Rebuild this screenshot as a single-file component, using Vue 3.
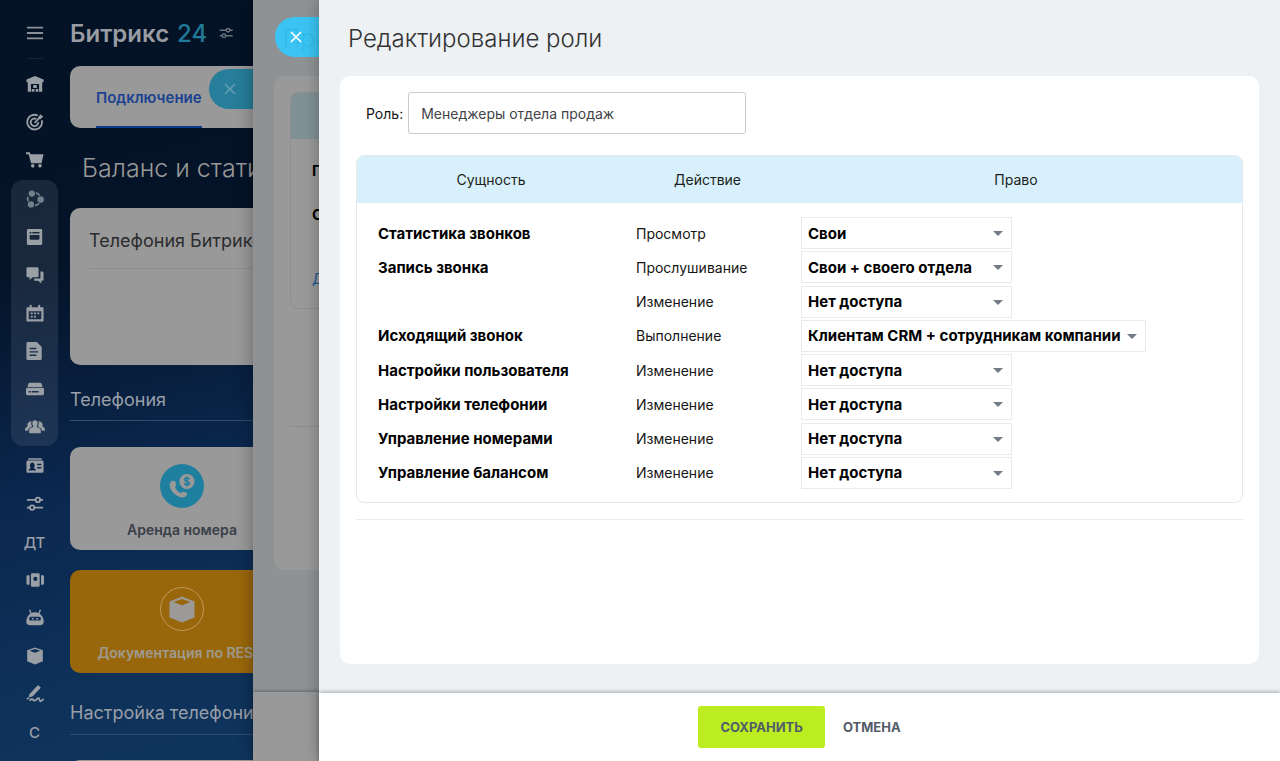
<script setup>
import { ref } from 'vue'

const role = ref('Менеджеры отдела продаж')

const rows = [
  { id: 'stat', entity: 'Статистика звонков', action: 'Просмотр', right: 'Свои' },
  { id: 'record', entity: 'Запись звонка', action: 'Прослушивание', right: 'Свои + своего отдела' },
  { id: 'record-edit', entity: '', action: 'Изменение', right: 'Нет доступа' },
  { id: 'call', entity: 'Исходящий звонок', action: 'Выполнение', right: 'Клиентам CRM + сотрудникам компании' },
  { id: 'user', entity: 'Настройки пользователя', action: 'Изменение', right: 'Нет доступа' },
  { id: 'tel', entity: 'Настройки телефонии', action: 'Изменение', right: 'Нет доступа' },
  { id: 'numbers', entity: 'Управление номерами', action: 'Изменение', right: 'Нет доступа' },
  { id: 'balance', entity: 'Управление балансом', action: 'Изменение', right: 'Нет доступа' },
]
</script>

<template>
  <div class="app">
    <nav class="side">
      <button class="item burger" type="button">
        <svg viewBox="0 0 20 20"><path d="M1 4h18M1 10h18M1 16h18" class="line" /></svg>
      </button>
      <hr class="side-line" />
      <a class="item" href="#">
        <svg viewBox="0 0 20 20"><path fill-rule="evenodd" d="M10 1 19.500 5V8H18v10.500H14.500V10h-9v8.500H2V8H.5V5ZM8 11h4v3.500H8ZM6.300 15.500h3V18.500h-3ZM10.700 15.500h3V18.500h-3Z" /></svg>
      </a>
      <a class="item" href="#">
        <svg viewBox="0 0 20 20"><path class="line" d="M13 2.700A8.200 8.200 0 1 0 17.500 8M11.500 6.700A4.200 4.200 0 1 0 13.600 10M9.500 11l5.500-5.500" /><path d="m13.500 4.500 3.300-3.500.6 2 2 .6-3.400 3.300-2.200-.2Z" /></svg>
      </a>
      <a class="item" href="#">
        <svg viewBox="0 0 20 20"><path d="M0 1.500h4.200l.8 2H19.500l-2.200 10H5.600L2.900 3.500H0Z" /><circle cx="7.500" cy="16.500" r="2" /><circle cx="15.500" cy="16.500" r="2" /></svg>
      </a>
      <div class="group">
        <a class="item soft" href="#">
          <svg viewBox="0 0 20 20"><circle cx="6.500" cy="4" r="3.500" /><circle cx="16.300" cy="10.500" r="3.600" /><circle cx="5.500" cy="16" r="3.500" /><path class="line" d="M11 3.300q3 .7 4 3M2.300 7.500q-1 2.500 0 5M10 17.300q3-.4 4.500-2.800" /></svg>
        </a>
        <a class="item" href="#">
          <svg viewBox="0 0 20 20"><path fill-rule="evenodd" d="M2.500 1h14Q18 1 18 2.500v15q0 1.500-1.500 1.500h-14Q1 19 1 17.500v-15Q1 1 2.500 1ZM4 4.500v1.600h2V4.500ZM7 4.500v1.600h8V4.500ZM4 7.800v4q0 1.200 1 1.200h9q1 0 1-1.200v-4Z" /></svg>
        </a>
        <a class="item" href="#">
          <svg viewBox="0 0 20 20"><path d="M2 1.500h10.500Q14 1.500 14 3v8q0 1.500-1.500 1.500H7.500L4 15.500v-3H2Q.5 12.500.5 11V3Q.5 1.500 2 1.500ZM16 6h2q1.500 0 1.500 1.500V15q0 1.500-1.500 1.500h-1V19.500l-3.500-3H9V14h7Z" /></svg>
        </a>
        <a class="item" href="#">
          <svg viewBox="0 0 20 20"><path fill-rule="evenodd" d="M.5 4.500q0-1 1-1H4V2a1.200 1.200 0 0 1 2.400 0v1.500h7V2A1.200 1.200 0 0 1 15.800 2v1.500h2.700q1 0 1 1V18.500q0 1-1 1H1.500q-1 0-1-1ZM3 8v9h14V8ZM5.200 9.500h2.300v2H5.200ZM8.800 9.500h2.300v2H8.800ZM12.500 9.500h2.300v2h-2.300ZM5.200 13h2.300v2H5.200ZM8.800 13h2.300v2H8.800Z" /></svg>
        </a>
        <a class="item" href="#">
          <svg viewBox="0 0 20 20"><path fill-rule="evenodd" d="M2 0H12l5.500 5.500V18.500q0 1.500-1.500 1.500H2Q.5 20 .5 18.500v-17Q.5 0 2 0ZM4 6.500v1.600h7.500V6.500ZM4 10.200v1.600h9.500v-1.600ZM4 14v1.600h7.500V14Z" /></svg>
        </a>
        <a class="item" href="#">
          <svg viewBox="0 0 20 20"><path fill-rule="evenodd" d="M4 3h12q1 0 1.500 1.500L18.500 8H1.500L2.500 4.500Q3 3 4 3ZM1 9h18q1 0 1 1v5.400q0 1.600-1.500 1.600H1.500Q0 17 0 15.400V10Q0 9 1 9ZM3 12.200v1.600h2.300v-1.600ZM6.300 12.200v1.600H14v-1.600Z" /></svg>
        </a>
        <a class="item" href="#">
          <svg class="wide" viewBox="0 0 22 20"><path d="M11 2.500c2 0 3 1.400 3 3.300 0 1.500-.7 2.600-1.300 3.300.1 1.300 4.800 1.800 4.800 4.400V17H4.500v-3.500c0-2.600 4.700-3.100 4.800-4.400C8.700 8.400 8 7.300 8 5.800 8 3.900 9 2.500 11 2.500ZM4.500 4.500c.8-1.200 2-1 2.500-.6-.5 2-.1 4 .8 5.200-.6 1.300-4.300 1.600-4.600 5H0v-1.900c0-1.900 2.700-2.200 3-3.200C1.700 8 2.800 5.200 4.500 4.500ZM17.500 4.500c-.8-1.200-2-1-2.500-.6.5 2 .1 4-.8 5.200.6 1.300 4.300 1.600 4.600 5H22v-1.900c0-1.900-2.700-2.200-3-3.200 1.300-1 .2-3.800-1.500-4.500Z" /></svg>
        </a>
      </div>
      <a class="item" href="#">
        <svg viewBox="0 0 20 20"><path fill-rule="evenodd" d="M2.500 1.500h15V3h-15ZM2 4h16q1.500 0 1.500 1.500V16q0 1.500-1.500 1.500H2Q.5 17.500.5 16V5.500Q.5 4 2 4ZM2.800 15h8.400c0-2-2.500-2-2.500-3C10.400 10.300 9.600 6 7 6S3.600 10.300 5.300 12C5.300 13 2.800 13 2.800 15ZM12.500 7.500v1.800H17V7.500ZM12.500 11v1.800H17V11Z" /></svg>
      </a>
      <a class="item" href="#">
        <svg viewBox="0 0 20 20"><path class="line" d="M1 5.500h9.500M16 5.500h3M1 14h3M9.500 14h9.500" /><circle class="line" cx="13.200" cy="5.500" r="2.500" /><circle class="line" cx="6.800" cy="14" r="2.500" /></svg>
      </a>
      <a class="item letter" href="#">ДТ</a>
      <a class="item" href="#">
        <svg viewBox="0 0 20 20"><path fill-rule="evenodd" d="M6.700 2.500h7.300q1.200 0 1.200 1.200v12.600q0 1.200-1.200 1.200H6.700q-1.200 0-1.200-1.200V3.700q0-1.200 1.200-1.200ZM10.400 6.500a2.300 2.300 0 1 0 0 4.600 2.300 2.300 0 0 0 0-4.600ZM.5 6q0-1.200 1.200-1.200h2.300v10.400H1.700Q.5 15.200.5 14ZM16.700 4.800h2.100Q20 4.800 20 6v8q0 1.200-1.200 1.200h-2.100Z" /></svg>
      </a>
      <a class="item" href="#">
        <svg viewBox="0 0 20 20"><path class="line thin" d="M4 .8 5.500 5M16 .8 14.500 5" /><path fill-rule="evenodd" d="M10 3.500c5 0 8.500 3.500 9.500 8.500.8 3.800-.5 6-3.500 6H4c-3 0-4.300-2.200-3.500-6C1.500 7 5 3.500 10 3.500ZM5.500 8.700a2.100 2.100 0 0 0 0 4.200h9a2.100 2.100 0 0 0 0-4.200ZM6.500 9.900h2v1.800h-2ZM11.500 9.900h2v1.800h-2Z" /></svg>
      </a>
      <a class="item" href="#">
        <svg viewBox="0 0 20 20"><path fill-rule="evenodd" d="m10 .5 8.700 3.200v12L10 19.500l-8.700-3.800v-12ZM4 4.200 10 6.500l6-2.300L10 2.200Z" /></svg>
      </a>
      <a class="item" href="#">
        <svg viewBox="0 0 20 20"><path d="m12 1.500 1.800-1.200 2.700 2.700L7.500 12.500l-4.500 1.500L3.500 10.500ZM.5 15 2.500 13.500l1.500 1.500-2.500 1.500Z" /><path class="line" d="M4 17.500q2.500-3 4-1t4-.8 3 .8 4.500-1" /></svg>
      </a>
      <a class="item letter" href="#">С</a>
    </nav>

    <main class="page">
      <h1 class="brand">Битрикс <span>24</span>
        <svg viewBox="0 0 20 20"><path class="line" d="M1 6h9.500M15.500 6h4M1 14h3.500M9.500 14h10" /><circle class="line" cx="13" cy="6" r="2.500" /><circle class="line" cx="7" cy="14" r="2.500" /></svg>
      </h1>
      <div class="card tabs"><a class="tab" href="#">Подключение</a></div>
      <h2 class="title">Баланс и статистика</h2>
      <section class="card balance"><h3>Телефония Битрикс24</h3></section>
      <h3 class="section">Телефония</h3>
      <a class="card tile" href="#">
        <svg class="tile-icon" viewBox="0 0 44 44">
          <circle cx="22" cy="22" r="22" fill="#1f7f9f" />
          <path fill="#999" d="M12 17c1.500-.8 3.200 0 3.700 1.800l.5 2c.2 1-1.300 1.800-1 2.700 1 2.500 3 4.500 5.400 5.500.9.300 1.600-1.300 2.600-1.200l2.300.5c1.700.5 2 2.200.8 3.500C21.800 37 9.700 28.600 9.700 21.200c0-2.100.8-3.500 2.300-4.200Z" />
          <circle cx="27" cy="17.500" r="7.600" fill="#999" />
          <path fill="none" stroke="#1f7f9f" stroke-width="1.500" d="M29.500 15.500c-.5-1.800-5-2-5 .2s5 1.400 5 3.600-4.500 2.200-5.200 0M27 12.500v10" />
        </svg>
        Аренда номера
      </a>
      <a class="card tile orange" href="#">
        <svg class="tile-icon" viewBox="0 0 44 44">
          <circle cx="22" cy="22" r="21.500" fill="none" stroke="#bd9a5c" />
          <path fill="#9b9a98" fill-rule="evenodd" d="m22 9.500 12.500 5v16L22 35.500l-12.500-5v-16ZM13.500 15 22 18.200 30.500 15 22 12Z" />
        </svg>
        Документация по RES...
      </a>
      <h3 class="section">Настройка телефонии</h3>
      <div class="card stub"></div>
    </main>

    <button class="close first" type="button" aria-label="×">
      <svg viewBox="0 0 12 12"><path d="m1 1 10 10M11 1 1 11" /></svg>
    </button>

    <aside class="panel back">
      <h2 class="panel-title">Права</h2>
      <div class="back-card">
        <div class="back-table">
          <div class="back-head"></div>
          <b>П</b>
          <b>С</b>
          <a href="#">Д</a>
        </div>
        <hr />
      </div>
      <div class="back-foot"></div>
    </aside>

    <button class="close second" type="button" aria-label="×">
      <svg viewBox="0 0 12 12"><path d="m1 1 10 10M11 1 1 11" /></svg>
    </button>

    <form class="panel front" @submit.prevent>
      <h2 class="front-title">Редактирование роли</h2>
      <div class="content">
        <div class="role">
          <label for="role">Роль:</label>
          <input id="role" v-model="role" type="text" />
        </div>
        <div class="frame">
          <table>
            <thead>
              <tr><th class="c1">Сущность</th><th class="c2">Действие</th><th>Право</th></tr>
            </thead>
            <tbody>
              <tr v-for="r in rows" :key="r.id">
                <td class="entity">{{ r.entity }}</td>
                <td><label :for="r.id">{{ r.action }}</label></td>
                <td>
                  <span class="select"><select :id="r.id"><option>{{ r.right }}</option></select></span>
                </td>
              </tr>
            </tbody>
          </table>
        </div>
        <hr class="end" />
      </div>
      <footer class="foot">
        <button class="save" type="submit">СОХРАНИТЬ</button>
        <button class="cancel" type="button">ОТМЕНА</button>
      </footer>
    </form>
  </div>
</template>

<style>
body {
  margin: 0;
}
</style>

<style scoped>
* {
  box-sizing: border-box;
}
.app {
  position: relative;
  display: flex;
  height: 100vh;
  overflow: hidden;
  font-family: Inter, "Liberation Sans", sans-serif;
  font-size: 15px;
  background: linear-gradient(168deg, #041226 0%, #041327 26%, #0b2850 50%, #0e3159 68%, #103b67 100%);
}
a {
  text-decoration: none;
}
button {
  border: 0;
  padding: 0;
  background: none;
  font: inherit;
}
h1, h2, h3, hr {
  margin: 0;
}
hr {
  border: 0;
}
.line {
  fill: none;
  stroke: currentColor;
  stroke-width: 2;
}
.thin {
  stroke-width: 1.5;
}

.side {
  display: flex;
  flex-direction: column;
  align-items: center;
  flex: none;
  width: 70px;
  padding: 14px 12px 0 11px;
}
.item {
  display: flex;
  align-items: center;
  justify-content: center;
  flex: none;
  width: 47px;
  height: 38px;
  color: #9a9fa6;
}
.item svg {
  width: 18px;
  height: 18px;
  fill: currentColor;
}
.item .wide {
  width: 20px;
}
.burger {
  color: #8a9099;
}
.soft {
  color: #75808d;
}
.letter {
  font-size: 15px;
  font-weight: 500;
}
.side-line {
  flex: none;
  width: 16px;
  height: 1px;
  margin: 6px 0;
  background: #182539;
}
.group {
  flex: none;
  margin: 1px 0;
  border-radius: 12px;
  background: rgba(150, 160, 180, 0.15);
}

.page {
  display: flex;
  flex-direction: column;
  flex: 1;
  min-width: 0;
  color: #999;
}
.page > * {
  flex: none;
}
.brand {
  display: flex;
  align-items: center;
  gap: 8px;
  height: 66px;
  font-size: 24px;
  font-weight: 600;
  color: #999da3;
}
.brand span {
  font-weight: 500;
  color: #207a99;
}
.brand svg {
  width: 14px;
  height: 14px;
  margin-left: 4px;
  color: #6a727d;
}
.card {
  border-radius: 10px;
  background: #999;
}
.tabs {
  height: 62px;
  padding-left: 26px;
}
.tab {
  display: inline-flex;
  align-items: center;
  height: 62px;
  padding-top: 2px;
  border-bottom: 2px solid #103c8f;
  font-weight: 600;
  color: #1a4291;
}
.title {
  height: 80px;
  padding-left: 12px;
  font-size: 25px;
  font-weight: 300;
  line-height: 80px;
}
.balance {
  height: 157px;
  padding: 0 19px;
}
.balance h3 {
  height: 61px;
  border-bottom: 1px solid #8b8d8f;
  font-size: 18px;
  font-weight: 400;
  line-height: 66px;
  color: #2b2c2e;
}
.section {
  height: 56px;
  border-bottom: 1px solid #2f4d70;
  font-size: 18px;
  font-weight: 400;
  line-height: 70px;
  color: #999fa8;
}
.tile {
  display: flex;
  flex-direction: column;
  align-items: center;
  gap: 13px;
  width: 224px;
  height: 103px;
  margin-top: 26px;
  padding-top: 17px;
  font-size: 14px;
  font-weight: 600;
  color: #3a4049;
}
.tile + .tile {
  margin-top: 20px;
}
.tile-icon {
  flex: none;
  width: 44px;
  height: 44px;
}
.orange {
  background: #99670b;
  color: #9f9a90;
}
.orange + .section {
  height: 62px;
  line-height: 80px;
}
.stub {
  height: 102px;
  margin-top: 25px;
}

.close {
  position: absolute;
  display: flex;
  align-items: center;
  height: 40px;
  border-radius: 20px 0 0 20px;
}
.close svg {
  width: 12px;
  height: 12px;
  fill: none;
  stroke: currentColor;
  stroke-width: 1.7;
}
.first {
  top: 69px;
  left: 209px;
  width: 44px;
  padding-left: 15px;
  background: #277e9a;
  color: #65a0b1;
}
.first svg {
  stroke-width: 1.5;
}
.second {
  top: 17px;
  left: 275px;
  width: 45px;
  padding-left: 15px;
  background: rgba(50, 202, 253, 0.9);
  color: #fff;
}

.panel {
  position: absolute;
  top: 0;
  right: 0;
  bottom: 0;
  display: flex;
  flex-direction: column;
}
.back {
  left: 253px;
  padding-left: 21px;
  background: #8e9294;
  box-shadow: 0 0 16px rgba(0, 0, 0, 0.35);
}
.panel-title {
  height: 76px;
  padding-left: 9px;
  font-size: 24px;
  font-weight: 300;
  line-height: 78px;
  color: #303336;
}
.back-card {
  height: 494px;
  padding: 16px;
  border-radius: 10px;
  background: #999;
}
.back-table {
  display: flex;
  flex-direction: column;
  height: 217px;
  overflow: hidden;
  border: 1px solid #8e8f90;
  border-radius: 8px;
  line-height: 44px;
}
.back-head {
  flex: none;
  height: 46px;
  margin-bottom: 10px;
  background: #809096;
}
.back-table b,
.back-table a {
  padding-left: 21px;
}
.back-table b {
  color: #000;
}
.back-table a {
  margin-top: 20px;
  color: #1d5893;
}
.back-card hr {
  height: 1px;
  margin-top: 117px;
  background: #8b8c8d;
}
.back-foot {
  height: 69px;
  margin: auto 0 0 -21px;
  background: #999;
  box-shadow: 0 -1px 3px rgba(0, 0, 0, 0.3);
}

.front {
  left: 319px;
  background: #edf1f4;
  box-shadow: 0 0 14px rgba(0, 0, 0, 0.3);
}
.front-title {
  height: 76px;
  padding-left: 29px;
  font-size: 24px;
  font-weight: 300;
  line-height: 78px;
  color: #333;
}
.content {
  flex: 1;
  margin: 0 21px 29px;
  padding: 16px;
  border-radius: 10px;
  background: #fff;
}
.role {
  display: flex;
  align-items: center;
  gap: 5px;
  padding-left: 10px;
  font-size: 14px;
  color: #151515;
}
.role input {
  width: 338px;
  height: 42px;
  padding: 0 12px;
  border: 1px solid #c6cdd3;
  border-radius: 3px;
  background: #fff;
  font: inherit;
  color: #424448;
}
.frame {
  overflow: hidden;
  margin-top: 21px;
  padding-bottom: 12px;
  border: 1px solid #e6e9eb;
  border-radius: 8px;
}
table {
  width: 100%;
  height: 334px;
  border-collapse: collapse;
  font-size: 14px;
}
th {
  height: 47px;
  padding: 0;
  background: #d7f0fb;
  font-weight: 400;
  color: #1b1f21;
}
.c1 {
  width: 268px;
}
.c2 {
  width: 165px;
}
td {
  padding: 1px 0 1px 11px;
  color: #151515;
}
.entity {
  padding-left: 21px;
  font-size: 15px;
  font-weight: 700;
  color: #000;
}
tbody tr:first-child td {
  padding-top: 14px;
}
.select {
  position: relative;
  display: inline-block;
  vertical-align: top;
}
.select::after {
  content: "";
  position: absolute;
  top: 14px;
  right: 9px;
  border: 5px solid transparent;
  border-top-color: #727b87;
  border-bottom: 0;
  pointer-events: none;
}
select {
  appearance: none;
  min-width: 211px;
  height: 32px;
  padding: 0 24px 0 6px;
  border: 1px solid #e8eaec;
  border-radius: 0;
  background: #fff;
  font: inherit;
  font-size: 15px;
  font-weight: 700;
  color: #000;
}
.end {
  height: 1px;
  margin-top: 16px;
  background: #e8eaeb;
}
.foot {
  display: flex;
  align-items: center;
  justify-content: center;
  gap: 18px;
  height: 68px;
  background: #fff;
  box-shadow: 0 -1px 4px rgba(0, 0, 0, 0.3);
  font-size: 13px;
  font-weight: 700;
  color: #525c69;
}
.save,
.cancel {
  height: 42px;
  color: inherit;
}
.save {
  padding: 0 22px;
  border-radius: 3px;
  background: #bbed21;
}
</style>
